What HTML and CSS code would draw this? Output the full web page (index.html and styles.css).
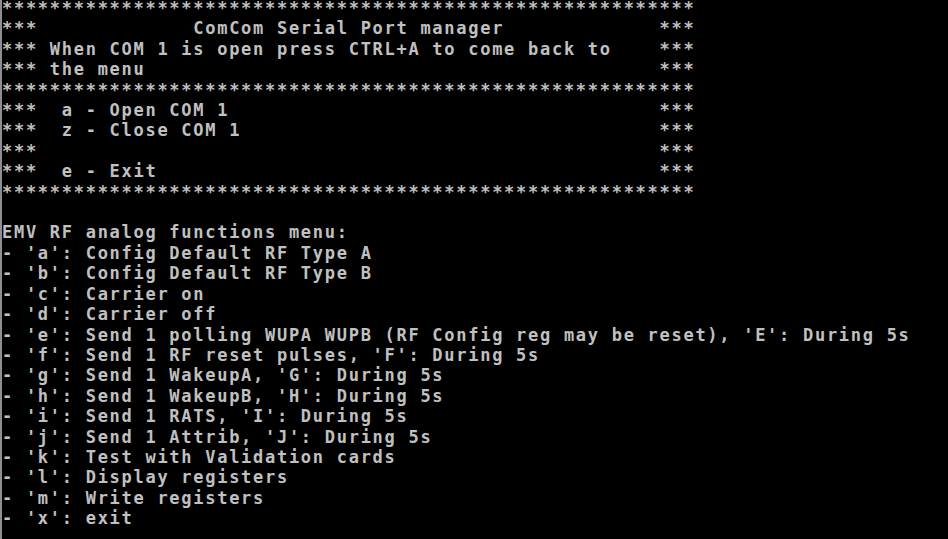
FILE: index.html
```html
<!DOCTYPE html>
<html lang="en">
<head>
    <meta charset="UTF-8">
    <meta name="viewport" content="width=device-width, initial-scale=1.0">
    <title>ComCom Serial Port manager</title>
    <link rel="stylesheet" href="styles.css">
</head>
<body>
<pre class="console">**********************************************************
***             ComCom Serial Port manager             ***
*** When COM 1 is open press CTRL+A to come back to    ***
*** the menu                                           ***
**********************************************************
***  a - Open COM 1                                    ***
***  z - Close COM 1                                   ***
***                                                    ***
***  e - Exit                                          ***
**********************************************************

EMV RF analog functions menu:
- 'a': Config Default RF Type A
- 'b': Config Default RF Type B
- 'c': Carrier on
- 'd': Carrier off
- 'e': Send 1 polling WUPA WUPB (RF Config reg may be reset), 'E': During 5s
- 'f': Send 1 RF reset pulses, 'F': During 5s
- 'g': Send 1 WakeupA, 'G': During 5s
- 'h': Send 1 WakeupB, 'H': During 5s
- 'i': Send 1 RATS, 'I': During 5s
- 'j': Send 1 Attrib, 'J': During 5s
- 'k': Test with Validation cards
- 'l': Display registers
- 'm': Write registers
- 'x': exit</pre>
</body>
</html>
```

FILE: styles.css
```css
html {
    background-color: #000;
}
body {
    margin: 0;
    min-height: 100vh;
    box-sizing: border-box;
    background-color: #000;
    border-left: 2px solid #8e8e8e;
    overflow: hidden;
}
.console {
    margin: -2px 0 0 0;
    padding: 0;
    font-family: "DejaVu Sans Mono", "Liberation Mono", monospace;
    font-weight: bold;
    font-size: 17px;
    letter-spacing: 1.72px;
    line-height: 20.4px;
    color: #c0c0c0;
    white-space: pre;
}
```
